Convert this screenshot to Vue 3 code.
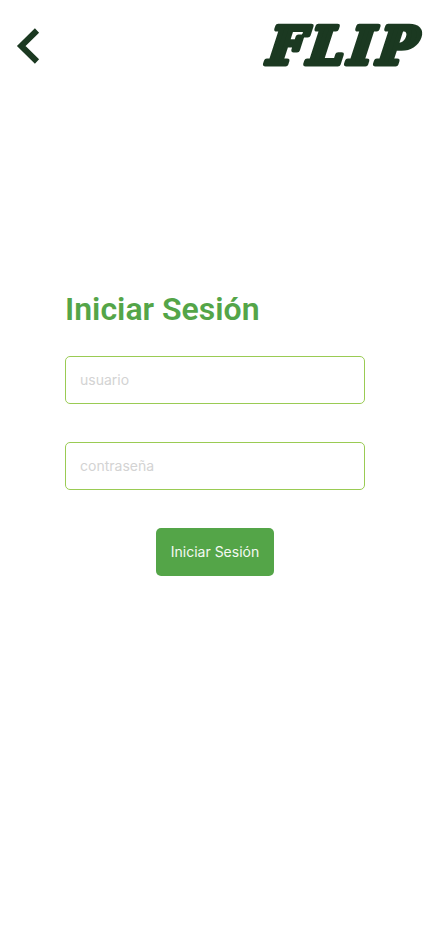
<script setup>
import { ref } from 'vue'

const usuario = ref('')
const clave = ref('')
</script>

<template>
  <main class="screen">
    <header class="bar">
      <button class="back" type="button" aria-label="Volver">
        <svg width="24" height="38" viewBox="0 0 24 38">
          <path d="M21 3.5 L5.2 19 L21 34.5" />
        </svg>
      </button>
      <svg class="logo" width="166" height="50" viewBox="0 0 166 50">
        <text transform="translate(0 43.5) scale(1.09 1) skewX(-7)" x="6.2 43.2 80.4 107.2" y="0">FLIP</text>
      </svg>
    </header>
    <form class="form" @submit.prevent>
      <h1>Iniciar Sesión</h1>
      <input v-model="usuario" type="text" placeholder="usuario" />
      <input v-model="clave" type="password" placeholder="contraseña" />
      <button class="submit" type="submit">Iniciar Sesión</button>
    </form>
  </main>
</template>

<style>
body {
  background: #fff;
}
</style>

<style scoped>
.screen {
  box-sizing: border-box;
  height: 932px;
  overflow: hidden;
}
.bar {
  box-sizing: border-box;
  display: flex;
  justify-content: space-between;
  height: 80px;
  padding: 20px 4px 0 16px;
}
.back {
  display: block;
  height: 38px;
  margin-top: 7px;
  padding: 0;
  border: 0;
  background: none;
}
.back svg {
  display: block;
}
.back path {
  fill: none;
  stroke: #1b3921;
  stroke-width: 6;
}
.logo {
  display: block;
  overflow: visible;
}
.logo text {
  font: italic 700 52px "DejaVu Serif Condensed", "DejaVu Serif", serif;
  font-stretch: condensed;
  fill: #1b3921;
  stroke: #1b3921;
  stroke-width: 4.8;
  stroke-linejoin: round;
}
.form {
  display: flex;
  flex-direction: column;
  width: 300px;
  margin: 210px auto 0;
}
h1 {
  margin: 0 0 28px;
  font: 600 32px/38px Roboto, sans-serif;
  color: #54a548;
}
input {
  box-sizing: border-box;
  width: 300px;
  height: 48px;
  margin: 0 0 38px;
  padding: 0 14px 2px;
  border: 1px solid #9acb54;
  border-radius: 5px;
  outline: none;
  background: #fff;
  font: 400 14px Inter, sans-serif;
  color: #333;
}
input::placeholder {
  color: #d3d3d3;
  opacity: 1;
}
.submit {
  align-self: center;
  width: 118px;
  height: 48px;
  padding: 0 0 2px;
  border: 0;
  border-radius: 5px;
  background: #54a548;
  font: 400 14px Inter, sans-serif;
  color: #f4f9f3;
  white-space: nowrap;
}
</style>
